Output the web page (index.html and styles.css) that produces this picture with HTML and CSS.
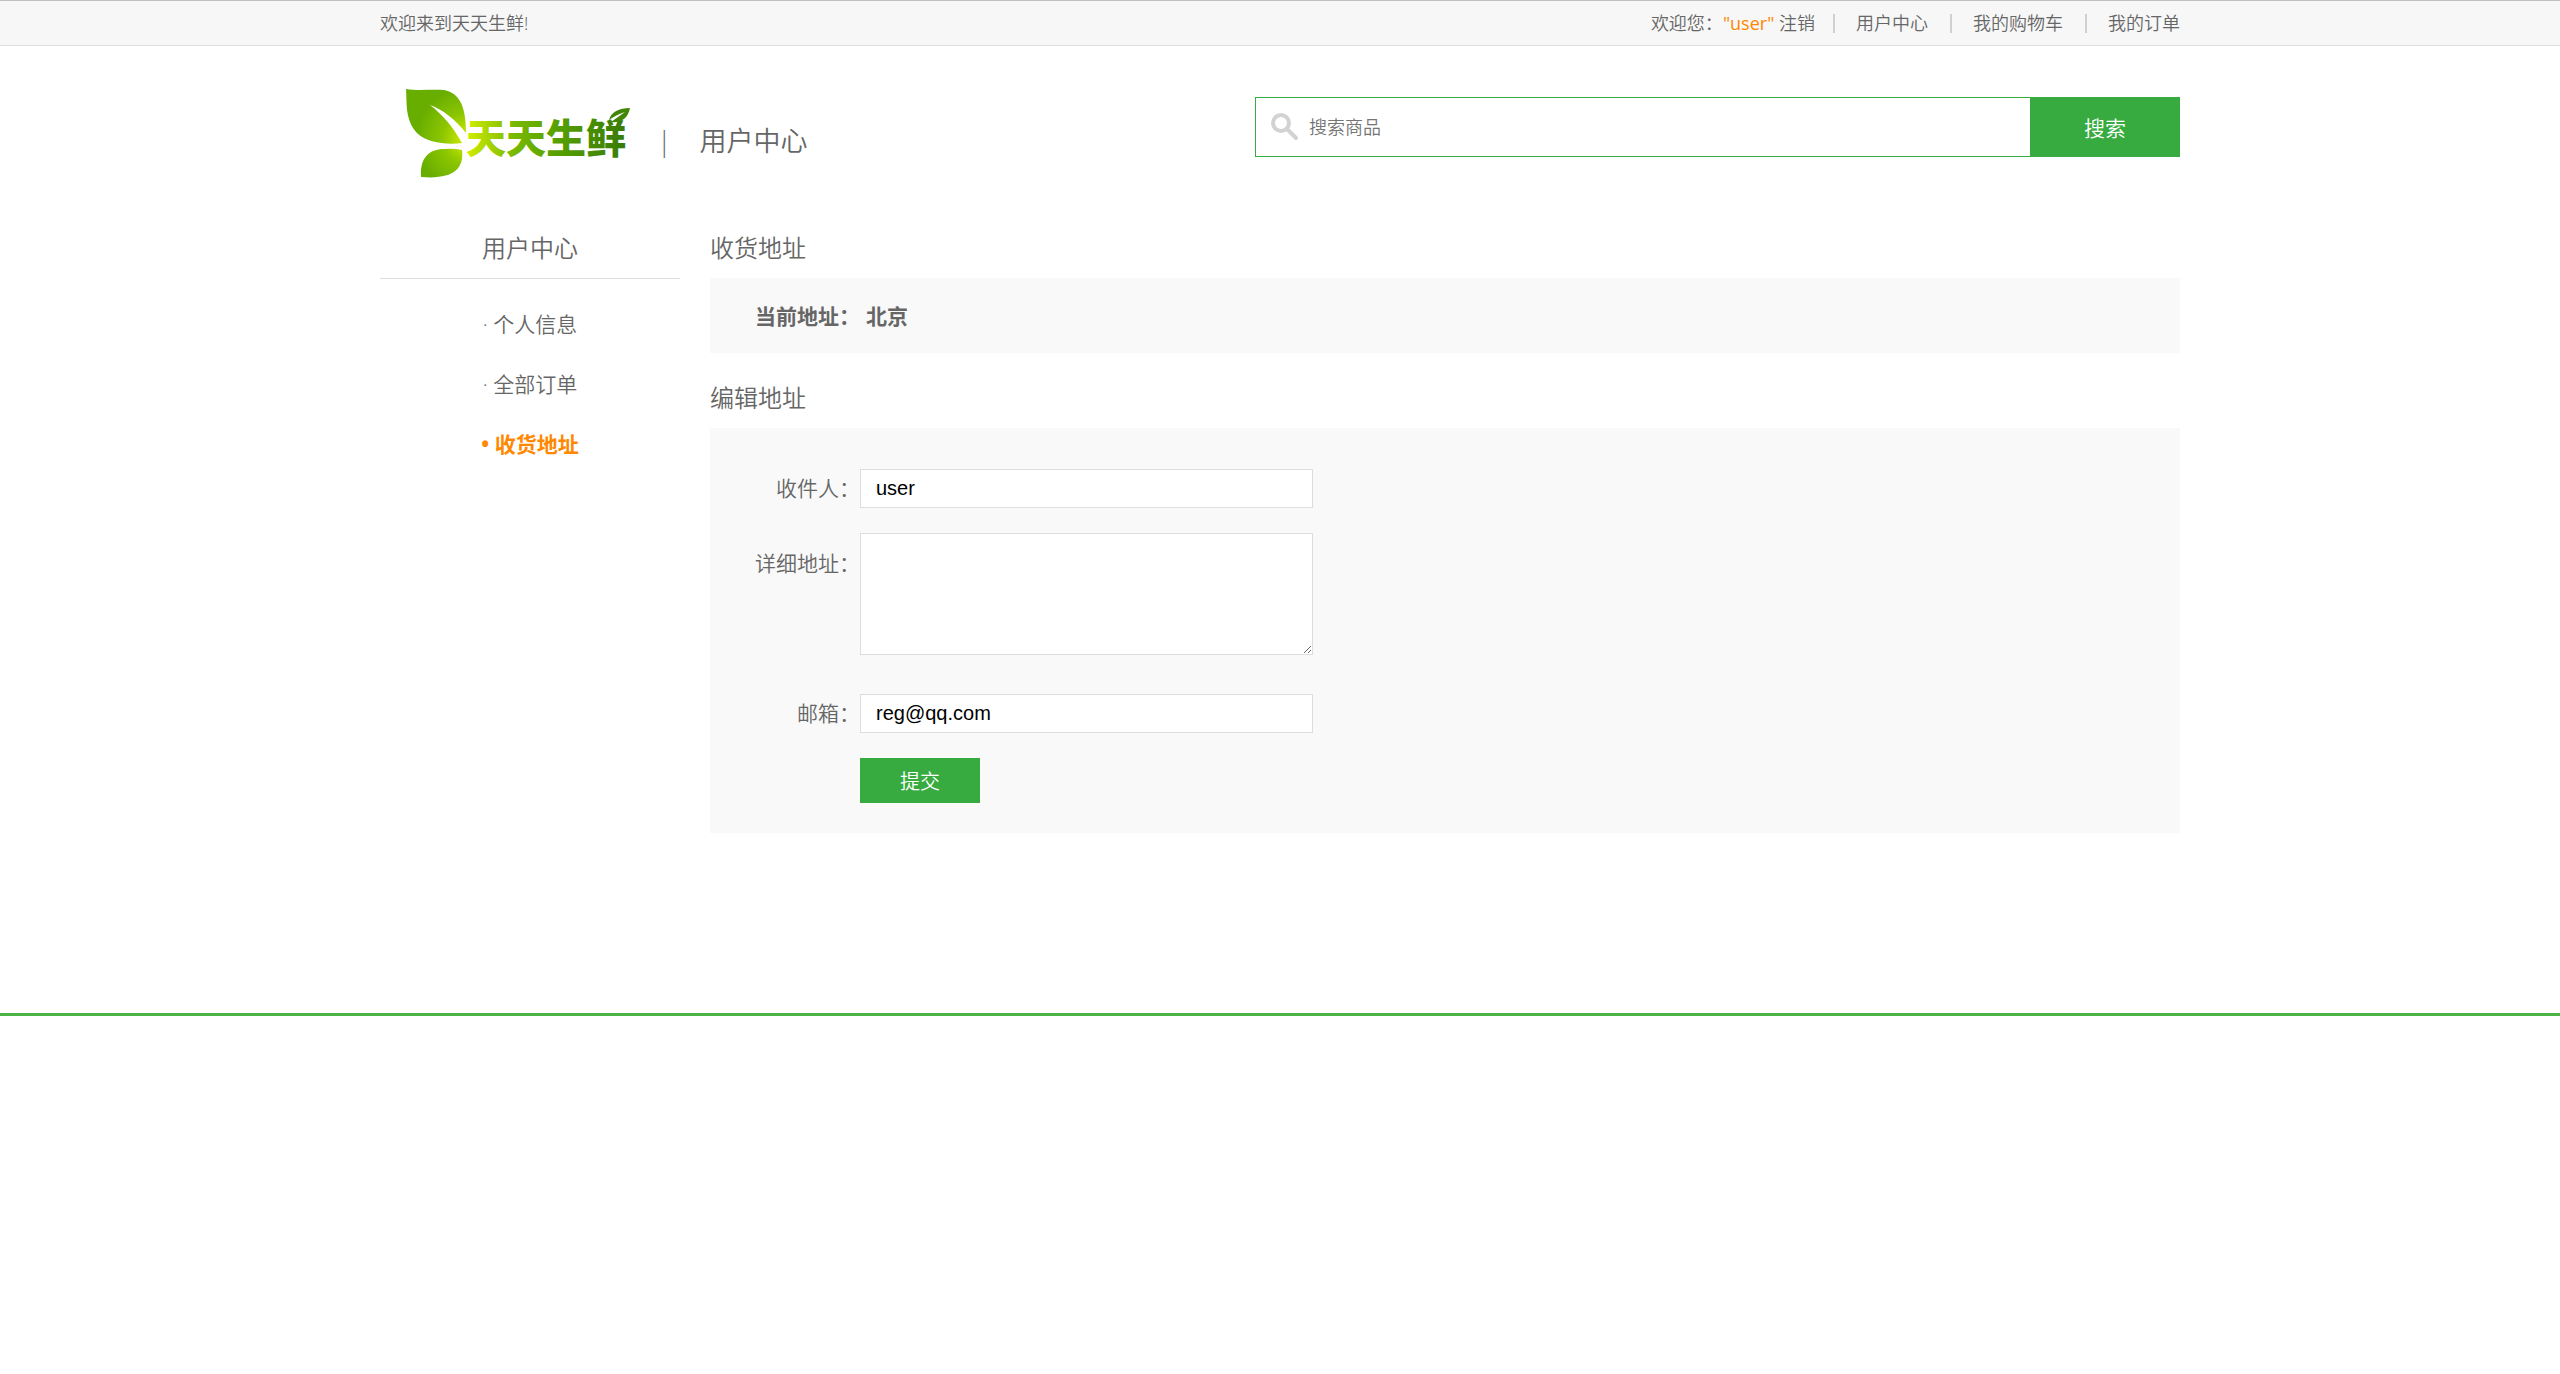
FILE: index.html
```html
<!DOCTYPE html>
<html lang="zh-CN">
<head>
  <meta charset="UTF-8">
  <meta name="viewport" content="width=device-width, initial-scale=1.0">
  <title>天天生鲜-用户中心</title>
  <link rel="stylesheet" href="styles.css">
</head>
<body>
  <!-- 顶部 -->
  <div class="header_con">
    <div class="header wrap">
      <div class="welcome">欢迎来到天天生鲜!</div>
      <div class="user_bar">
        <div class="login_info">欢迎您：<em>"user"</em> <a href="#">注销</a></div>
        <a class="user_link" href="#">用户中心</a>
        <a class="user_link" href="#">我的购物车</a>
        <a class="user_link" href="#">我的订单</a>
      </div>
    </div>
  </div>

  <!-- logo 和搜索 -->
  <div class="search_bar wrap">
    <a class="logo" href="#">
      <svg width="225" height="90" viewBox="0 0 225 90" role="img" aria-label="天天生鲜">
        <defs>
          <radialGradient id="leaf" gradientUnits="userSpaceOnUse" cx="62" cy="50" r="52">
            <stop offset="0" stop-color="#d8f000"/>
            <stop offset="0.5" stop-color="#8cc600"/>
            <stop offset="1" stop-color="#68ae00"/>
          </radialGradient>
          <linearGradient id="word" gradientUnits="userSpaceOnUse" x1="60" y1="0" x2="222" y2="0">
            <stop offset="0" stop-color="#d2ee00"/>
            <stop offset="0.3" stop-color="#78b800"/>
            <stop offset="0.6" stop-color="#539c00"/>
            <stop offset="1" stop-color="#387a08"/>
          </linearGradient>
        </defs>
        <path fill="url(#leaf)" d="M0 0C12 2 26 0 38 1C53 4 60 16 60 44C49 30 37 21 24 16C37 26 47 38 56 54C41 56 21 54 11 44C-1 31 1 15 0 0Z"/>
        <path fill="url(#leaf)" d="M15 88C14 70 22 60 38 60Q48 59 56 61C58 78 50 91 15 88Z"/>
        <text class="logo_text" x="60" y="64" fill="url(#word)">天天生鲜</text>
        <path fill="#418606" d="M203 31C205 23 213 19 224 19C222 29 216 34 205 33L219 23C211 26 207 28 203 31Z"/>
      </svg>
    </a>
    <div class="sub_page_name">|<span>用户中心</span></div>
    <form class="search_con">
      <svg class="search_icon" width="28" height="28" viewBox="0 0 28 28" aria-hidden="true">
        <circle cx="10" cy="10" r="8" fill="none" stroke="#d2d2d2" stroke-width="4"/>
        <path d="M17 17L25 25" stroke="#d2d2d2" stroke-width="4" stroke-linecap="round"/>
      </svg>
      <input class="input_text" type="text" placeholder="搜索商品" aria-label="搜索商品">
      <button class="input_btn" type="button">搜索</button>
    </form>
  </div>

  <!-- 主体 -->
  <div class="main_con wrap">
    <div class="left_menu_con">
      <h3>用户中心</h3>
      <ul>
        <li><a href="#">· 个人信息</a></li>
        <li><a href="#">· 全部订单</a></li>
        <li><a class="active" href="#">• 收货地址</a></li>
      </ul>
    </div>
    <div class="right_content">
      <h3 class="common_title">收货地址</h3>
      <dl class="site_con current">
        <dt>当前地址：</dt>
        <dd>北京</dd>
      </dl>
      <h3 class="common_title">编辑地址</h3>
      <form class="site_con edit">
        <div class="form_group">
          <label for="receiver">收件人：</label>
          <input id="receiver" type="text" value="user">
        </div>
        <div class="form_group address">
          <label for="address">详细地址：</label>
          <textarea id="address"></textarea>
        </div>
        <div class="form_group">
          <label for="email">邮箱：</label>
          <input id="email" type="text" value="reg@qq.com">
        </div>
        <button class="info_submit" type="button">提交</button>
      </form>
    </div>
  </div>

  <div class="footer"></div>
</body>
</html>
```
FILE: styles.css
```css
* {
  box-sizing: border-box;
}

body, h3, ul, dl, dd {
  margin: 0;
  padding: 0;
}

body {
  font-family: "Open Sans", "Noto Sans CJK SC", sans-serif;
  font-size: 18px;
  font-weight: 350;
  color: #666;
  background: #fff;
}

h3 {
  font-weight: inherit;
}

ul {
  list-style: none;
}

em {
  font-style: normal;
}

a {
  color: #666;
  text-decoration: none;
}

a:hover {
  color: #ff8800;
}

input, textarea, button {
  margin: 0;
  outline: none;
}

.wrap {
  max-width: 1800px;
  margin: 0 auto;
}

/* 顶部 */
.header_con {
  background: #f7f7f7;
  border-top: 1px solid #c0c0c0;
  border-bottom: 1px solid #ddd;
}

.header {
  display: flex;
  justify-content: space-between;
  height: 44px;
  line-height: 44px;
}

.user_bar {
  display: flex;
  align-items: center;
}

.login_info {
  margin-right: -4px;
}

.login_info em {
  color: #ff8800;
  font-weight: normal;
}

.user_link {
  display: flex;
  align-items: center;
}

.user_link::before {
  content: "";
  width: 2px;
  height: 19px;
  margin: 0 21px 0 22px;
  background: #d0d0d0;
}

/* logo 和搜索 */
.search_bar {
  display: flex;
  align-items: flex-start;
  height: 172px;
}

.logo {
  margin: 43px 0 0 26px;
}

.logo svg {
  display: block;
}

.logo_text {
  font-family: "Noto Sans CJK SC", sans-serif;
  font-size: 40px;
  font-weight: 900;
}

.sub_page_name {
  display: flex;
  gap: 28px;
  margin: 75px 0 0 26px;
  font-size: 27px;
  line-height: 40px;
}

.search_con {
  position: relative;
  display: flex;
  width: 925px;
  height: 60px;
  margin: 51px 0 0 auto;
}

.search_icon {
  position: absolute;
  left: 16px;
  top: 16px;
}

.input_text {
  flex: 1;
  padding: 0 16px 0 53px;
  border: 1px solid #37ab40;
  border-right: 0;
  font-family: inherit;
  font-size: 18px;
  font-weight: inherit;
}

.input_text::placeholder {
  color: #757575;
}

.input_btn {
  width: 150px;
  border: 0;
  background: #37ab40;
  color: #fff;
  font-family: inherit;
  font-size: 21px;
  font-weight: inherit;
}

/* 主体 */
.main_con {
  display: flex;
  gap: 30px;
}

.left_menu_con {
  width: 300px;
}

.left_menu_con h3 {
  height: 61px;
  border-bottom: 1px solid #ddd;
  font-size: 24px;
  line-height: 60px;
  text-align: center;
}

.left_menu_con ul {
  padding-top: 15px;
}

.left_menu_con li {
  font-size: 21px;
  line-height: 60px;
  text-align: center;
}

.left_menu_con .active {
  color: #ff8800;
  font-weight: bold;
}

.right_content {
  flex: 1;
}

.common_title {
  height: 60px;
  font-size: 24px;
  line-height: 60px;
}

.site_con {
  margin-bottom: 15px;
  background: #f9f9f9;
  font-size: 21px;
}

.current {
  display: flex;
  gap: 6px;
  height: 75px;
  padding-left: 45px;
  font-weight: bold;
  line-height: 76px;
}

.edit {
  padding: 41px 0 30px 45px;
}

.form_group {
  display: flex;
  margin-bottom: 25px;
}

.form_group label {
  width: 105px;
  line-height: 39px;
  text-align: right;
}

.form_group input, .form_group textarea {
  width: 453px;
  padding: 0 15px;
  border: 1px solid #ddd;
  background: #fff;
  color: #000;
  font-family: "Liberation Sans", sans-serif;
  font-size: 20px;
}

.form_group input {
  height: 39px;
}

.form_group textarea {
  height: 122px;
  padding: 10px 15px;
}

.address {
  margin-bottom: 39px;
}

.address label {
  padding-top: 11px;
}

.info_submit {
  display: block;
  width: 120px;
  height: 45px;
  margin-left: 105px;
  border: 0;
  background: #37ab40;
  color: #fff;
  font-family: inherit;
  font-size: 20px;
  font-weight: inherit;
}

.footer {
  margin-top: 165px;
  border-top: 3px solid #4ab344;
}
```
